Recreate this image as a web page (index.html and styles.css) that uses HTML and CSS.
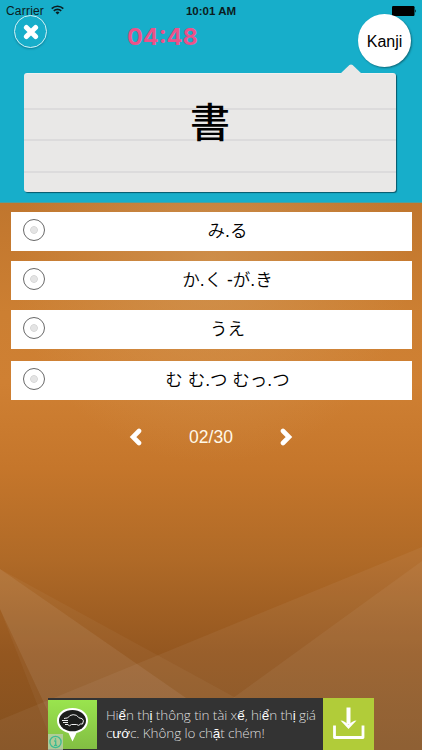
FILE: index.html
```
<!DOCTYPE html>
<html lang="ja">
<head>
    <meta charset="UTF-8">
    <meta name="viewport" content="width=device-width, initial-scale=1.0">
    <title>Kanji</title>
    <link rel="stylesheet" href="styles.css">
</head>
<body>
    <div class="header">
        <div class="status">
            <div class="carrier">Carrier
                <svg class="wifi" width="13" height="10" viewBox="0 0 13 10" fill="none" stroke="#0b1c20" stroke-width="1.6">
                    <path d="M.7 3.6a8.3 8.3 0 0 1 11.6 0M2.8 5.9a5.3 5.3 0 0 1 7.4 0"/>
                    <path d="M4.5 7.4a2.9 2.9 0 0 1 4 0L6.5 9.6z" fill="#0b1c20" stroke="none"/>
                </svg>
            </div>
            <div class="clock">10:01 AM</div>
            <svg class="battery" width="25" height="10" viewBox="0 0 25 10">
                <rect x="0" y="0" width="22.5" height="10" rx="1.2"/>
                <path d="M23.2 3.3q1.6 1.7 0 3.4z"/>
            </svg>
        </div>
        <div class="topbar">
            <button class="close">
                <svg width="16" height="16" viewBox="0 0 16 16" stroke="#fff" stroke-width="5" stroke-linecap="round">
                    <path d="M3.4 3.4l9.2 9.2M12.6 3.4l-9.2 9.2"/>
                </svg>
            </button>
            <div class="timer">04:48</div>
            <div class="badge">Kanji</div>
        </div>
        <div class="card">
            <svg class="pointer" width="22" height="10" viewBox="0 0 22 10"><path d="M0 10L9.4 1q1.6-1.2 3.2 0L22 10z" fill="#e9e8e7"/></svg>
            <span class="kanji">書</span>
        </div>
    </div>

    <div class="quiz">
        <svg class="rays" width="422" height="220" viewBox="0 0 422 220" fill="#fff">
            <path d="M0 39L236 168L300 220H55L0 79z" fill-opacity=".04"/>
            <path d="M0 39L186 168L240 220H66L0 79z" fill-opacity=".07"/>
            <path d="M422 17L0 190V220H422z" fill-opacity=".05"/>
            <path d="M422 31L233 168L170 220H422z" fill-opacity=".05"/>
        </svg>
        <div class="answers">
            <div class="answer"><span class="radio"></span><span>み.る</span></div>
            <div class="answer"><span class="radio"></span><span>か.く -が.き</span></div>
            <div class="answer"><span class="radio"></span><span>うえ</span></div>
            <div class="answer last"><span class="radio"></span><span>む む.つ むっ.つ</span></div>
        </div>
        <div class="pager">
            <svg width="13" height="18" viewBox="0 0 13 18" fill="none" stroke="#fff" stroke-width="4.6"><path d="M10 3L4 9l6 6" stroke-linecap="round"/></svg>
            <span class="count">02/30</span>
            <svg width="13" height="18" viewBox="0 0 13 18" fill="none" stroke="#fff" stroke-width="4.6"><path d="M3 3l6 6-6 6" stroke-linecap="round"/></svg>
        </div>
        <div class="ad">
            <div class="ad-logo">
                <svg width="49" height="49" viewBox="0 0 49 49">
                    <path d="M24.500 8C15 8 9 13.500 9 20.500C9 27 14 31.500 20.500 33L24.500 41.500L28.500 33C35 31.500 40 27 40 20.500C40 13.500 34 8 24.500 8z" fill="#fff"/>
                    <ellipse cx="24.500" cy="20.600" rx="13.500" ry="10.700" fill="#1c1d1b"/>
                    <path d="M16 18.500q2-.500 3.500-.500l2.500-2.500q3-1.500 6.500-.200l2.500 2.500q4 .200 4.500 3l-1 3.200h-2q-1.500 2.500-4 .500h-5q-2 2.500-4 0M14 20.500h6M15 22.500h5M17 24.500h3" fill="none" stroke="#eee" stroke-width="1"/>
                </svg>
                <span class="info"><svg width="15" height="16" viewBox="0 0 15 16" fill="none" stroke="#3dbb91" stroke-width="1.300">
                    <circle cx="7.500" cy="8" r="5.600"/><path d="M7.500 4.200v1.600M6.200 7h1.500v4.200M6 11.300h3.200"/>
                </svg></span>
            </div>
            <div class="ad-text">Hi<b>ể</b>n th<b>ị</b> thông tin tài x<b>ế</b>, hi<b>ể</b>n th<b>ị</b> giá<br>c<b>ướ</b>c. Không lo ch<b>ặ</b>t chém!</div>
            <div class="ad-download">
                <svg width="51" height="51" viewBox="0 0 51 51" fill="none" stroke="#fff">
                    <path d="M25.500 9.500v17" stroke-width="4"/>
                    <path d="M17.500 22.500q4 0 8 4.500q4-4.500 8-4.500L25.500 31z" fill="#fff" stroke="none"/>
                    <path d="M11.500 27.500v12h28.500v-12" stroke-width="2.800" stroke-linejoin="round"/>
                </svg>
            </div>
        </div>
    </div>
</body>
</html>
```
FILE: styles.css
```
* {
    box-sizing: border-box;
}

body {
    margin: 0;
    width: 422px;
    height: 750px;
    overflow: hidden;
    display: flex;
    flex-direction: column;
    font-family: "Liberation Sans", "Noto Sans CJK JP", sans-serif;
    color: #000;
}

.header {
    height: 203px;
    background-color: #17aeca;
    border-bottom: 1px solid #4fa09b;
    flex: none;
}

.status {
    display: grid;
    grid-template-columns: 1fr auto 1fr;
    height: 22px;
    padding: 0 6px;
    align-items: center;
    font-size: 12px;
    color: #0b1c20;
}

.wifi {
    margin-left: 3px;
    vertical-align: 0;
}

.carrier {
    letter-spacing: .2px;
}

.clock {
    font-weight: bold;
    font-size: 11.5px;
}

.battery {
    justify-self: end;
    margin-right: -1px;
    fill: #000;
}

.topbar {
    display: flex;
    height: 51px;
    padding: 0 11px 0 14px;
    margin-top: -7px;
    position: relative;
    align-items: flex-start;
}

.close {
    width: 33px;
    height: 33px;
    padding: 0;
    border: 1.5px solid #d3f1f5;
    border-radius: 50%;
    background: none;
    display: flex;
    align-items: center;
    justify-content: center;
    box-shadow: 0 1px 2px rgba(0, 60, 80, .4);
}

.timer {
    margin: 8px 0 0 80px;
    font: bold 23.5px/28px Inter, sans-serif;
    color: #ec5289;
}

.badge {
    width: 53px;
    height: 53px;
    margin-left: auto;
    margin-top: -1px;
    border-radius: 50%;
    background-color: #fff;
    box-shadow: 1px 1px 2px rgba(0, 0, 0, .4);
    font-size: 16px;
    line-height: 55px;
    text-align: center;
}

.card {
    position: relative;
    width: 372px;
    height: 119px;
    margin: 7px 0 0 24px;
    border-radius: 3px;
    background-color: #e9e8e7;
    background-image: linear-gradient(#dcdbdc, #dcdbdc), linear-gradient(#dcdbdc, #dcdbdc), linear-gradient(#dcdbdc, #dcdbdc);
    background-size: 100% 2px;
    background-position: 0 35px, 0 66px, 0 98px;
    background-repeat: no-repeat;
    box-shadow: 1px 1px 1px rgba(0, 50, 65, .7), inset 0 1px 0 #f1f0ef;
    text-align: center;
}

.pointer {
    position: absolute;
    left: 316px;
    top: -9px;
}

.kanji {
    font: 500 40px/94px "Noto Sans CJK JP", sans-serif;
}

.quiz {
    flex: 1;
    position: relative;
    display: flex;
    flex-direction: column;
    padding: 9px 10.5px 0;
    background: radial-gradient(ellipse 200px 200px at 50% 60px, rgba(215, 165, 105, .45), rgba(215, 165, 105, 0)),
        linear-gradient(#c0762e 0, #cc7f32 110px, #cf8033 180px, #c5762b 265px, #b06a27 355px, #945720 450px, #83501f 547px);
}

.rays {
    position: absolute;
    left: 0;
    bottom: 0;
}

.answer {
    height: 39px;
    margin-bottom: 10px;
    background-color: #fff;
    display: grid;
    grid-template-columns: 22px 1fr;
    padding: 0 1px 0 12px;
    font-family: "Liberation Sans", "Noto Sans CJK JP", sans-serif;
    font-size: 17.5px;
    font-weight: 350;
    line-height: 39px;
    text-align: center;
}

.answer.last {
    margin-top: 12px;
}

.radio {
    width: 22px;
    height: 22px;
    margin-top: 7px;
    border: 1.5px solid #686868;
    border-radius: 50%;
    background: radial-gradient(circle at 50% 50%, #e4e4e4 2.8px, #cdcdcd 3.3px, #fff 4.2px);
}

.pager {
    display: flex;
    justify-content: center;
    align-items: center;
    height: 20px;
    margin-top: 17px;
    gap: 47px;
    color: #fff8e8;
    font-size: 17.5px;
}

.ad {
    position: relative;
    width: 326px;
    height: 52px;
    margin: auto 0 0 37.5px;
    display: flex;
    background-color: #333;
}

.ad-logo {
    position: relative;
    width: 49px;
    height: 49px;
    margin-top: 2px;
    background: linear-gradient(#9ae44e, #82be43);
}

.info {
    position: absolute;
    left: 0;
    bottom: -1px;
    width: 15px;
    height: 16px;
    background-color: rgba(190, 205, 180, .75);
}

.info svg {
    display: block;
}

.ad-text {
    flex: 1;
    padding: 9px 0 0 9px;
    font: 300 13.5px/17.5px "Open Sans", sans-serif;
    letter-spacing: -.1px;
    color: #ddd;
    white-space: nowrap;
}

.ad-text b {
    font-family: "Liberation Sans", sans-serif;
    font-weight: normal;
    color: #fff;
}

.ad-download {
    width: 51px;
    background-color: #b1cc39;
}
```
